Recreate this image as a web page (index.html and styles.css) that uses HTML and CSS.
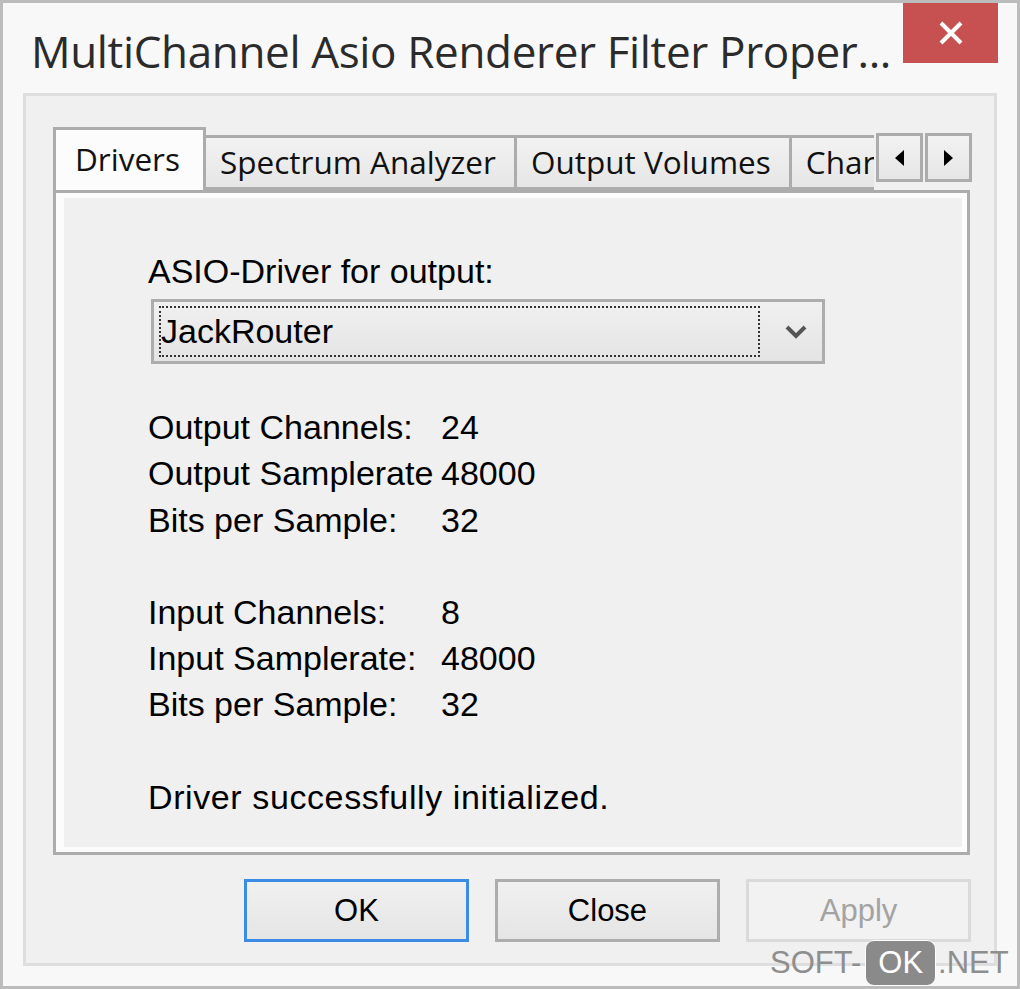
FILE: index.html
```html
<!DOCTYPE html>
<html lang="en">
<head>
    <meta charset="UTF-8">
    <title>MultiChannel Asio Renderer Filter Properties</title>
    <link rel="stylesheet" href="styles.css">
</head>
<body>

<div class="window">
    <div class="titlebar">
        <h1 class="title">MultiChannel Asio Renderer Filter Proper...</h1>
        <button class="close-btn" aria-label="Close">
            <svg width="26" height="24" viewBox="0 0 26 24"><path d="M3 2 L23 22 M23 2 L3 22" stroke="#fff" stroke-width="4" fill="none"/></svg>
        </button>
    </div>

    <div class="client">
        <div class="tabs">
            <div class="tab-strip">
                <div class="tab-list">
                    <div class="tab active">Drivers</div>
                    <div class="tab">Spectrum Analyzer</div>
                    <div class="tab">Output Volumes</div>
                    <div class="tab">Char</div>
                </div>
                <div class="tab-scroll">
                    <button class="scroll-btn"><span class="arrow arrow-left"></span></button>
                    <button class="scroll-btn"><span class="arrow arrow-right"></span></button>
                </div>
            </div>

            <div class="tab-page">
                <div class="page-content">
                    <div class="line">ASIO-Driver for output:</div>
                    <div class="select">
                        <span class="select-value">JackRouter</span>
                        <svg class="chevron" width="24" height="16" viewBox="0 0 24 16"><path d="M3 3 L12 12 L21 3" stroke="#555" stroke-width="4" fill="none"/></svg>
                    </div>

                    <div class="info">
                        <div class="row"><span class="key">Output Channels:</span><span>24</span></div>
                        <div class="row"><span class="key">Output Samplerate</span><span>48000</span></div>
                        <div class="row"><span class="key">Bits per Sample:</span><span>32</span></div>
                    </div>

                    <div class="info">
                        <div class="row"><span class="key">Input Channels:</span><span>8</span></div>
                        <div class="row"><span class="key">Input Samplerate:</span><span>48000</span></div>
                        <div class="row"><span class="key">Bits per Sample:</span><span>32</span></div>
                    </div>

                    <div class="line status">Driver successfully initialized.</div>
                </div>
            </div>
        </div>

        <div class="buttons">
            <button class="btn default">OK</button>
            <button class="btn">Close</button>
            <button class="btn disabled">Apply</button>
        </div>
    </div>
</div>

<div class="watermark">SOFT-<span class="wm-ok">OK</span>.NET</div>

</body>
</html>
```

FILE: styles.css
```css
body {
    margin: 0;
    padding: 0;
    background-color: #f8f8f8;
    font-family: "Liberation Sans", Arial, sans-serif;
    color: #000;
}

.window {
    position: relative;
    width: 1020px;
    height: 989px;
    box-sizing: border-box;
    border: 3px solid #bcbcbc;
    background-color: #f8f8f8;
    display: flex;
    flex-direction: column;
}

.titlebar {
    display: flex;
    justify-content: space-between;
    align-items: flex-start;
    height: 87px;
}

.title {
    margin: 18px 0 0 28px;
    font-family: "Open Sans", sans-serif;
    font-weight: normal;
    font-size: 44px;
    line-height: 60px;
    color: #2b2b2b;
    letter-spacing: -0.35px;
    white-space: nowrap;
}

.close-btn {
    width: 95px;
    height: 60px;
    margin-right: 19px;
    border: none;
    background-color: #c75050;
    display: flex;
    align-items: center;
    justify-content: center;
    padding: 0;
}

.client {
    flex: 1;
    margin: 3px 20px 20px 20px;
    border: 3px solid #dedede;
    background-color: #f0f0f0;
    padding: 31px 24px 0 27px;
}

/* tabs */
.tab-strip {
    display: flex;
    align-items: flex-end;
    height: 63px;
}

.tab-list {
    flex: 1;
    display: flex;
    align-items: flex-end;
    overflow: hidden;
    height: 63px;
    position: relative;
    z-index: 2;
}

.tab {
    flex-shrink: 0;
    height: 55px;
    box-sizing: border-box;
    border: 3px solid #acacac;
    border-left: none;
    background: linear-gradient(#f2f2f2, #e6e6e6);
    font-family: "Open Sans", sans-serif;
    font-size: 31.5px;
    line-height: 48px;
    padding: 0 18px 0 14px;
    white-space: nowrap;
    color: #111;
}

.tab.active {
    height: 66px;
    margin-bottom: -3px;
    border-left: 3px solid #acacac;
    border-bottom: none;
    background: #fcfcfc;
    padding: 0 23px 0 19px;
    line-height: 58px;
}

.tab-scroll {
    display: flex;
    gap: 2px;
    margin: 0 -2px 8px 2px;
}

.scroll-btn {
    width: 47px;
    height: 49px;
    box-sizing: border-box;
    border: 3px solid #acacac;
    background: linear-gradient(#f2f2f2, #e6e6e6);
    display: flex;
    align-items: center;
    justify-content: center;
    padding: 0;
}

.arrow {
    width: 0;
    height: 0;
    border-top: 8px solid transparent;
    border-bottom: 8px solid transparent;
}

.arrow-left {
    border-right: 9px solid #000;
}

.arrow-right {
    border-left: 9px solid #000;
}

.tab-page {
    height: 665px;
    box-sizing: border-box;
    border: 3px solid #acacac;
    background-color: #fcfcfc;
    padding: 5px 5px 5px 8px;
}

.page-content {
    height: 100%;
    background-color: #f0f0f0;
    padding: 50px 0 0 84px;
    box-sizing: border-box;
    font-size: 34px;
    line-height: 46.2px;
}

.select {
    width: 674px;
    height: 65px;
    box-sizing: border-box;
    margin-top: 5px;
    margin-left: 3px;
    border: 3px solid #adadad;
    background: linear-gradient(#f0f0f0, #e4e4e4);
    display: flex;
    align-items: center;
    padding: 0 14px 0 5px;
}

.select-value {
    flex: 1;
    margin-right: 24px;
    height: 47px;
    line-height: 46px;
    border: 2px dotted #333;
}

.info {
    margin-top: 40px;
}

.info + .info {
    margin-top: 46.2px;
}

.row {
    display: flex;
}

.key {
    width: 293px;
    white-space: nowrap;
}

.status {
    margin-top: 46.2px;
    letter-spacing: 0.6px;
}

/* bottom buttons */
.buttons {
    display: flex;
    justify-content: flex-end;
    gap: 26px;
    margin-top: 24px;
    margin-right: -1px;
}

.btn {
    width: 225px;
    height: 63px;
    box-sizing: border-box;
    border: 3px solid #adadad;
    background: linear-gradient(#f0f0f0, #e5e5e5);
    font-family: "Liberation Sans", Arial, sans-serif;
    font-size: 31px;
    color: #000;
    padding: 0;
}

.btn.default {
    border-color: #3c8ce6;
}

.btn.disabled {
    border-color: #dadada;
    background: #f2f2f2;
    color: #a3a3a3;
}

.watermark {
    position: absolute;
    left: 770px;
    top: 941px;
    height: 44px;
    font-family: "Liberation Sans", Arial, sans-serif;
    font-size: 31px;
    line-height: 44px;
    color: #8e8e8e;
    display: flex;
    align-items: center;
}

.wm-ok {
    background-color: #8a8a8a;
    color: #fff;
    border: 1px solid #fff;
    border-radius: 9px;
    padding: 0 12px;
    margin: 0 2px 0 4px;
}
```
